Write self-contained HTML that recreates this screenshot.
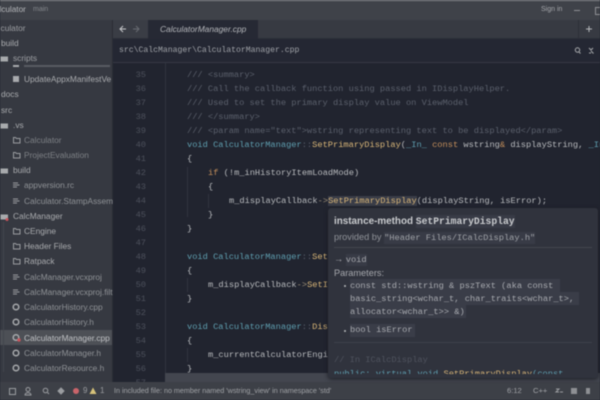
<!DOCTYPE html>
<html><head><meta charset="utf-8">
<style>
html,body{margin:0;padding:0;background:#21242f}
#r{position:relative;width:600px;height:400px;overflow:hidden;background:#21242f;filter:blur(.5px)}
#r div{position:absolute;white-space:pre}
.s{font:8.35px/14px "Liberation Sans",sans-serif;color:#a9abae}
.f{color:#8f9296}
.n{font:8.7px/14px "Liberation Mono",monospace;color:#4d515c;width:30px;left:116px;text-align:right}
.c{font:8.7px/14px "Liberation Mono",monospace;color:#b9bbbe;left:187px}
.d{color:#5b606c}.k{color:#5f9fb0}.y{color:#d9b678}.o{color:#c48f5b}
.p{font:9.2px/14px "Liberation Sans",sans-serif;color:#a6a8ad}
.m{font:8.7px/13px "Liberation Mono",monospace;color:#a9abb0}
svg{position:absolute;overflow:visible}
</style></head><body><div id="r">
<div class="n" style="top:54px">34</div>
<div class="n" style="top:376px">57</div>
<div style="left:0;top:0;width:600px;height:1px;background:#8d8f91"></div>
<div style="left:0;top:1px;width:600px;height:19px;background:#3f4249"></div>
<div class="s" style="left:-11px;top:3px;color:#b5b7ba;font-size:8.2px">Calculator</div>
<div class="s" style="left:33px;top:3px;color:#85888d;font-size:7px">main</div>
<div class="s" style="left:541px;top:3px;color:#a5a7ab;font-size:7px">Sign in</div>
<div style="left:574px;top:10px;width:6px;height:1px;background:#8e9094"></div>
<div style="left:595px;top:7px;width:8px;height:6px;border:1px solid #8e9094"></div>

<div style="left:0;top:20px;width:112px;height:362px;background:#363941"></div>
<div style="left:112px;top:20px;width:1px;height:362px;background:#2a2d35"></div>
<div style="left:113px;top:20px;width:35px;height:18px;background:#3a3d45"></div>
<div style="left:148px;top:20px;width:110px;height:19px;background:#262934"></div>
<div style="left:258px;top:20px;width:342px;height:18px;background:#373a42"></div>
<div style="left:578px;top:20px;width:1px;height:18px;background:#2d3038"></div>
<div style="left:113px;top:38px;width:35px;height:1px;background:#2c2f38"></div>
<div style="left:258px;top:38px;width:342px;height:1px;background:#2c2f38"></div>
<svg style="left:0;top:0" width="600" height="400" fill="none">
<path d="M126 29h-5.500M123 26l-3 3 3 3" stroke="#c8c9cc" stroke-width="1"/>
<path d="M133 29h5.500M136 26l3 3-3 3" stroke="#686b72" stroke-width="1"/>
<path d="M589 26v6M586 29h6" stroke="#b5b7ba" stroke-width="1"/>
</svg>
<div class="s" style="left:160px;top:22px;color:#b4b6ba;font-style:italic;font-size:8.4px">CalculatorManager.cpp</div>

<div style="left:113px;top:39px;width:487px;height:23px;background:#242733"></div>
<div style="left:113px;top:62px;width:487px;height:1px;background:#353844"></div>
<div style="left:119px;top:44px;font:8.15px/14px 'Liberation Mono',monospace;color:#a0a3a8">src\CalcManager\CalculatorManager.cpp</div>
<div class="n" style="top:54px;height:0"></div>
<div style="left:165px;top:63px;width:1px;height:310px;background:#30333e"></div>
<svg style="left:0;top:0" width="600" height="400" fill="none">
<circle cx="577.500" cy="50" r="2.200" stroke="#a8aaad"/><path d="M579 52l1.500 1.500" stroke="#a8aaad"/>
<path d="M589 48l2 2 2-2 M591 51l2.500 2.500M589 53h2" stroke="#a8aaad"/>
</svg>

<div class="s" style="left:-12px;top:21px;color:#9b9da1">Calculator</div>
<div class="s" style="left:1px;top:36px;">build</div>
<div class="s" style="left:13px;top:51px;color:#9c9ea2">scripts</div>
<div style="left:24px;top:65px;width:86px;height:2px;background:#585b62"></div>
<div style="left:13px;top:65px;width:6px;height:2px;background:#a8aaad"></div>
<div class="s" style="left:24px;top:72px;">UpdateAppxManifestVe</div>
<div class="s" style="left:1px;top:87px;">docs</div>
<div class="s" style="left:1px;top:103px;">src</div>
<div class="s" style="left:13px;top:118px;">.vs</div>
<div class="s f" style="left:24px;top:133px;color:#7d8085">Calculator</div>
<div class="s f" style="left:24px;top:148px;color:#7d8085">ProjectEvaluation</div>
<div class="s" style="left:13px;top:163px;">build</div>
<div class="s f" style="left:24px;top:178px;">appversion.rc</div>
<div class="s f" style="left:24px;top:194px;">Calculator.StampAssem</div>
<div class="s" style="left:13px;top:209px;">CalcManager</div>
<div class="s" style="left:24px;top:224px;">CEngine</div>
<div class="s" style="left:24px;top:239px;">Header Files</div>
<div class="s" style="left:24px;top:254px;">Ratpack</div>
<div class="s f" style="left:24px;top:270px;">CalcManager.vcxproj</div>
<div class="s f" style="left:24px;top:285px;">CalcManager.vcxproj.filt</div>
<div class="s f" style="left:24px;top:300px;">CalculatorHistory.cpp</div>
<div class="s f" style="left:24px;top:315px;">CalculatorHistory.h</div>
<div style="left:0;top:330px;width:112px;height:15px;background:#4d5056"></div>
<div class="s" style="left:24px;top:331px;color:#c0c2c5">CalculatorManager.cpp</div>
<div class="s f" style="left:24px;top:346px;">CalculatorManager.h</div>
<div class="s f" style="left:24px;top:361px;">CalculatorResource.h</div>
<svg style="left:0;top:0" width="112" height="382" fill="none" stroke="#9a9ca0">
<path d="M1 57h6.500v4h-6.500z" fill="#a8aaad" stroke="#a8aaad"/>
<rect x="13" y="76" width="6" height="6" fill="#a8aaad" stroke="none"/>
<path d="M1 124h6.500v4h-6.500z" fill="#a8aaad" stroke="#a8aaad"/>
<path d="M1 169h6.500v4h-6.500z" fill="#a8aaad" stroke="#a8aaad"/>
<path d="M1 215h6.500v4h-6.500z" fill="#a8aaad" stroke="#a8aaad"/>
<circle cx="7" cy="219.500" r="1.500" fill="#c9545c" stroke="none"/>
<path d="M13.500 137.500h2l1 1h3.500v4.500h-6.500z"/>
<path d="M13.500 152.500h2l1 1h3.500v4.500h-6.500z"/>
<path d="M13.500 228.500h2l1 1h3.500v4.500h-6.500z"/>
<path d="M13.500 243.500h2l1 1h3.500v4.500h-6.500z"/>
<path d="M13.500 258.500h2l1 1h3.500v4.500h-6.500z"/>
<path d="M13 183h5M13 185h6.500M13 187h4"/><path d="M13 199h5M13 201h6.500M13 203h4"/>
<path d="M13 275h5M13 277h6.500M13 279h4"/><path d="M13 290h5M13 292h6.500M13 294h4"/>
<g stroke-width="1.500" stroke="#a8aaad">
<circle cx="16" cy="307" r="2.800"/><circle cx="16" cy="322" r="2.800"/><circle cx="16" cy="337.500" r="2.800"/><circle cx="16" cy="353" r="2.800"/><circle cx="16" cy="368" r="2.800"/>
</g>
<circle cx="19" cy="340" r="1.700" fill="#c9545c" stroke="none"/>
<path d="M3.500 222v150" stroke="#42454d"/>
</svg>

<div class="n" style="top:68px">35</div><div class="n" style="top:82px">36</div><div class="n" style="top:96px">37</div><div class="n" style="top:110px">38</div><div class="n" style="top:124px">39</div><div class="n" style="top:138px">40</div><div class="n" style="top:152px">41</div><div class="n" style="top:166px">42</div><div class="n" style="top:180px">43</div><div class="n" style="top:194px">44</div><div class="n" style="top:208px">45</div><div class="n" style="top:222px">46</div><div class="n" style="top:236px">47</div><div class="n" style="top:250px">48</div><div class="n" style="top:264px">49</div><div class="n" style="top:278px">50</div><div class="n" style="top:292px">51</div><div class="n" style="top:306px">52</div><div class="n" style="top:320px">53</div><div class="n" style="top:334px">54</div><div class="n" style="top:348px">55</div><div class="n" style="top:362px">56</div>

<div class="c d" style="top:68px">/// &lt;summary&gt;</div>
<div class="c d" style="top:82px">/// Call the callback function using passed in IDisplayHelper.</div>
<div class="c d" style="top:96px">/// Used to set the primary display value on ViewModel</div>
<div class="c d" style="top:110px">/// &lt;/summary&gt;</div>
<div class="c d" style="top:124px">/// &lt;param name="text"&gt;wstring representing text to be displayed&lt;/param&gt;</div>
<div class="c" style="top:138px"><span class="k">void</span> <span class="k">CalculatorManager</span><span class="d">::</span><span class="y">SetPrimaryDisplay</span>(<span class="k">_In_</span> <span class="o">const</span> wstring<span class="o">&amp;</span> displayString, <span class="k">_In_</span></div>
<div class="c" style="top:152px">{</div>
<div class="c" style="top:166px;left:208px"><span class="o">if</span> (!m_inHistoryItemLoadMode)</div>
<div class="c" style="top:180px;left:208px">{</div>
<div class="c" style="top:194px;left:229px">m_displayCallback<span style="color:#9c8f78">-&gt;</span><span class="y" style="background:#3a3d48">SetPrimaryDisplay</span>(displayString, isError);</div>
<div class="c" style="top:208px;left:208px">}</div>
<div class="c" style="top:222px">}</div>
<div class="c" style="top:250px"><span class="k">void</span> <span class="k">CalculatorManager</span><span class="d">::</span><span class="y">SetPrimaryDisplay</span></div>
<div class="c" style="top:264px">{</div>
<div class="c" style="top:278px;left:208px">m_displayCallback<span style="color:#9c8f78">-&gt;</span><span class="y">SetIsError</span></div>
<div class="c" style="top:292px">}</div>
<div class="c" style="top:320px"><span class="k">void</span> <span class="k">CalculatorManager</span><span class="d">::</span><span class="y">DisplayPasteError</span></div>
<div class="c" style="top:334px">{</div>
<div class="c" style="top:348px;left:208px">m_currentCalculatorEngine</div>
<div class="c" style="top:362px">}</div>
<div style="left:187px;top:167px;width:1px;height:50px;background:#30333e"></div>
<div style="left:208px;top:194px;width:1px;height:14px;background:#30333e"></div>
<div style="left:187px;top:278px;width:1px;height:14px;background:#30333e"></div>
<div style="left:187px;top:348px;width:1px;height:14px;background:#30333e"></div>

<div style="left:165px;top:373px;width:435px;height:9px;background:#43464f"></div>
<div style="left:0;top:382px;width:600px;height:18px;background:#3d4047"></div>

<div style="left:328px;top:208px;width:270px;height:170px;background:#30333d;border-radius:3px;box-shadow:0 1px 4px #1a1c22;overflow:hidden">
<div class="p" style="left:6px;top:7px;color:#c9cbce;font-weight:bold;font-size:9.9px">instance-method <span style="font:bold 9.7px 'Liberation Mono',monospace;background:#383b46;padding:1px 0">SetPrimaryDisplay</span></div>
<div class="p" style="left:6px;top:22px;color:#8f9298">provided by <span style="font:8.7px 'Liberation Mono',monospace;background:#383b46;color:#a0a3a8;padding:1px 0">"Header Files/ICalcDisplay.h"</span></div>
<div style="left:6px;top:39px;width:258px;height:1px;background:#43464f"></div>
<div class="p" style="left:6px;top:44px">→ <span style="font:8.7px 'Liberation Mono',monospace;background:#383b46;padding:1px 0">void</span></div>
<div class="p" style="left:6px;top:58px">Parameters:</div>
<div style="left:16px;top:77px;width:2px;height:2px;border-radius:50%;background:#b5b7ba"></div>
<div style="left:16px;top:122px;width:2px;height:2px;border-radius:50%;background:#b5b7ba"></div>
<div style="left:22px;top:71px;width:210px;height:13px;background:#3a3d48"></div>
<div style="left:22px;top:84px;width:229px;height:13px;background:#3a3d48"></div>
<div style="left:22px;top:97px;width:116px;height:13px;background:#3a3d48"></div>
<div style="left:22px;top:116px;width:65px;height:13px;background:#3a3d48"></div>
<div class="m" style="left:22px;top:72px">const std::wstring &amp; pszText (aka const</div>
<div class="m" style="left:22px;top:85px">basic_string&lt;wchar_t, char_traits&lt;wchar_t&gt;,</div>
<div class="m" style="left:22px;top:98px">allocator&lt;wchar_t&gt;&gt; &amp;)</div>
<div class="m" style="left:22px;top:116px">bool isError</div>
<div style="left:6px;top:134px;width:258px;height:1px;background:#3d404a"></div>
<div class="m d" style="left:6px;top:146px;color:#4f535e">// In ICalcDisplay</div>
<div class="m" style="left:6px;top:160px;color:#5f9fb0">public: virtual void <span class="y">SetPrimaryDisplay</span>(const</div>
<div style="left:0;top:166px;width:270px;height:4px;background:#30333d"></div>
</div>

<svg style="left:0;top:0" width="600" height="400" fill="none" stroke="#9a9ca0">
<rect x="9.500" y="388.500" width="6" height="6"/>
<circle cx="28" cy="389.500" r="2"/><path d="M25 395c0-3 6-3 6 0z"/>
<circle cx="45.500" cy="390.500" r="2.300"/><path d="M47.500 392.500l1.500 1.500"/>
<path d="M58 391l3-3 3 3-3 3z" fill="#9a9ca0"/>
<circle cx="76" cy="391" r="3" fill="#c9646a" stroke="none"/>
<path d="M93 387.500l3.500 6.500h-7z" fill="#d6c27a" stroke="none"/>
<rect x="571" y="388" width="6" height="6" fill="#8e9094" stroke="none"/>
<path d="M586 388h4v6h-4z" fill="#8e9094" stroke="none"/>
<path d="M556 389h3l-3 3h3M560 392h3"/>
</svg>
<div class="s" style="left:83px;top:384px;font-size:8px;color:#9a9ca0">9</div>
<div class="s" style="left:100px;top:384px;font-size:8px;color:#9a9ca0">1</div>
<div class="s" style="left:114px;top:384px;font-size:7.2px;color:#a0a2a6">In included file: no member named 'wstring_view' in namespace 'std'</div>
<div class="s" style="left:507px;top:384px;font-size:7.6px;color:#a0a2a6">6:12</div>
<div class="s" style="left:533px;top:384px;font-size:7.6px;color:#a0a2a6">C++</div>
</div></body></html>
